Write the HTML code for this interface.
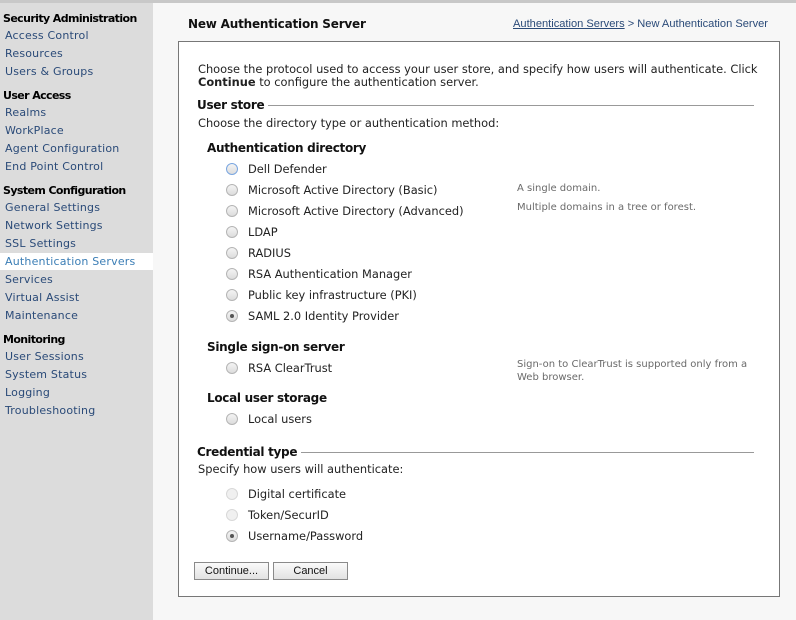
<!DOCTYPE html>
<html><head><meta charset="utf-8"><style>
*{margin:0;padding:0;box-sizing:border-box}
body{width:796px;height:620px;background:#f7f7f7;font-family:"DejaVu Sans","Liberation Sans",sans-serif;font-size:11px;color:#222;position:relative;overflow:hidden}
.a{position:absolute;white-space:nowrap;line-height:14px}
#top{position:absolute;left:0;top:0;width:796px;height:3px;background:#c8c8c8}
#side{position:absolute;left:0;top:3px;width:153px;height:617px;background:#dcdcdc}
.h{font-weight:bold;color:#000;font-size:11px;left:3px;letter-spacing:-0.6px}
.l{color:#2a4a78;left:5px;letter-spacing:.2px}
.act{position:absolute;left:0;width:153px;top:253px;height:17px;background:#fff}
#panel{position:absolute;left:178px;top:41px;width:602px;height:556px;background:#fff;border:1px solid #777}
.r{position:absolute;width:12px;height:12px;border-radius:50%;border:1px solid #b5b5b5;background:linear-gradient(#f4f4f4,#dcdcdc)}
.r.on::after{content:"";position:absolute;left:3px;top:3px;width:4px;height:4px;border-radius:50%;background:#555}
.r.dis{border-color:#d8d8d8;background:#f0f0f0}
.d{color:#6a6a6a;font-size:10px}
.sec{font-weight:bold;color:#111;font-size:12px;letter-spacing:-0.3px}
.line{position:absolute;height:1px;background:#999}
.btn{position:absolute;height:18px;border:1px solid #8a8a8a;background:linear-gradient(#fafafa,#e2e2e2);font-size:11px;text-align:center;line-height:16px;color:#111;font-family:"Liberation Sans",sans-serif}
.m{font-size:11.4px}
</style></head><body>
<div id="top"></div>
<div id="side"></div>
<div class="act"></div>
<div class="a h" style="top:12px">Security Administration</div>
<div class="a l" style="top:29px">Access Control</div>
<div class="a l" style="top:47px">Resources</div>
<div class="a l" style="top:65px">Users &amp; Groups</div>
<div class="a h" style="top:89px">User Access</div>
<div class="a l" style="top:106px">Realms</div>
<div class="a l" style="top:124px">WorkPlace</div>
<div class="a l" style="top:142px">Agent Configuration</div>
<div class="a l" style="top:160px">End Point Control</div>
<div class="a h" style="top:184px">System Configuration</div>
<div class="a l" style="top:201px">General Settings</div>
<div class="a l" style="top:219px">Network Settings</div>
<div class="a l" style="top:237px">SSL Settings</div>
<div class="a l" style="top:255px;color:#3a7db5">Authentication Servers</div>
<div class="a l" style="top:273px">Services</div>
<div class="a l" style="top:291px">Virtual Assist</div>
<div class="a l" style="top:309px">Maintenance</div>
<div class="a h" style="top:333px">Monitoring</div>
<div class="a l" style="top:350px">User Sessions</div>
<div class="a l" style="top:368px">System Status</div>
<div class="a l" style="top:386px">Logging</div>
<div class="a l" style="top:404px">Troubleshooting</div>

<div class="a" style="left:188px;top:17px;font-weight:bold;font-size:12px;color:#111;letter-spacing:-0.2px">New Authentication Server</div>
<div class="a" style="left:513px;top:17px;color:#2a4a78;font-size:11.1px;font-family:'Liberation Sans',sans-serif"><u>Authentication Servers</u> &gt; New Authentication Server</div>

<div id="panel"></div>
<div class="a m" style="left:198px;top:62px">Choose the protocol used to access your user store, and specify how users will authenticate. Click</div>
<div class="a m" style="left:198px;top:75px"><b>Continue</b> to configure the authentication server.</div>
<div class="a sec" style="left:197px;top:98px">User store</div>
<div class="line" style="left:268px;top:105px;width:486px"></div>
<div class="a m" style="left:198px;top:116px">Choose the directory type or authentication method:</div>
<div class="a sec" style="left:207px;top:141px">Authentication directory</div>

<div class="r" style="left:226px;top:163px;border-color:#7aa6e0"></div><div class="a m" style="left:248px;top:162px">Dell Defender</div>
<div class="r" style="left:226px;top:184px"></div><div class="a m" style="left:248px;top:183px">Microsoft Active Directory (Basic)</div>
<div class="a d" style="left:517px;top:182px">A single domain.</div>
<div class="r" style="left:226px;top:205px"></div><div class="a m" style="left:248px;top:204px">Microsoft Active Directory (Advanced)</div>
<div class="a d" style="left:517px;top:201px">Multiple domains in a tree or forest.</div>
<div class="r" style="left:226px;top:226px"></div><div class="a m" style="left:248px;top:225px">LDAP</div>
<div class="r" style="left:226px;top:247px"></div><div class="a m" style="left:248px;top:246px">RADIUS</div>
<div class="r" style="left:226px;top:268px"></div><div class="a m" style="left:248px;top:267px">RSA Authentication Manager</div>
<div class="r" style="left:226px;top:289px"></div><div class="a m" style="left:248px;top:288px">Public key infrastructure (PKI)</div>
<div class="r on" style="left:226px;top:310px"></div><div class="a m" style="left:248px;top:309px">SAML 2.0 Identity Provider</div>

<div class="a sec" style="left:207px;top:340px">Single sign-on server</div>
<div class="r" style="left:226px;top:362px"></div><div class="a m" style="left:248px;top:361px">RSA ClearTrust</div>
<div class="a d" style="left:517px;top:358px">Sign-on to ClearTrust is supported only from a</div>
<div class="a d" style="left:517px;top:371px">Web browser.</div>

<div class="a sec" style="left:207px;top:391px">Local user storage</div>
<div class="r" style="left:226px;top:413px"></div><div class="a m" style="left:248px;top:412px">Local users</div>

<div class="a sec" style="left:197px;top:445px">Credential type</div>
<div class="line" style="left:301px;top:452px;width:453px"></div>
<div class="a m" style="left:198px;top:462px">Specify how users will authenticate:</div>
<div class="r dis" style="left:226px;top:488px"></div><div class="a m" style="left:248px;top:487px">Digital certificate</div>
<div class="r dis" style="left:226px;top:509px"></div><div class="a m" style="left:248px;top:508px">Token/SecurID</div>
<div class="r on" style="left:226px;top:530px"></div><div class="a m" style="left:248px;top:529px">Username/Password</div>

<div class="btn" style="left:194px;top:562px;width:75px">Continue...</div>
<div class="btn" style="left:273px;top:562px;width:75px">Cancel</div>
</body></html>
